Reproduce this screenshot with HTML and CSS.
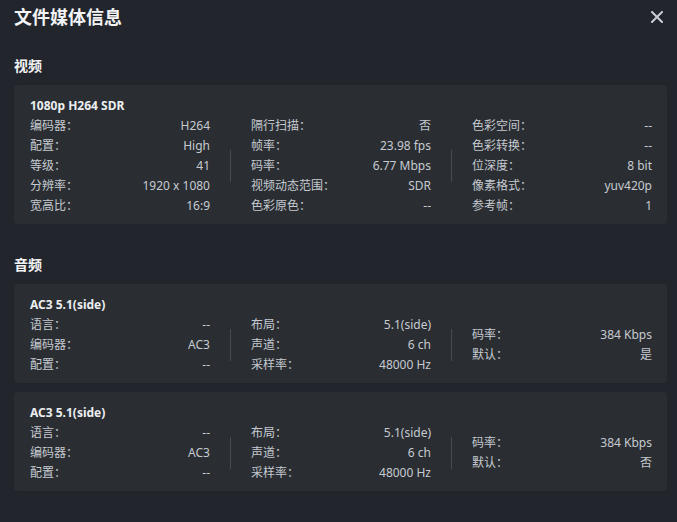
FILE: index.html
```html
<!DOCTYPE html>
<html lang="zh-CN">
<head>
<meta charset="UTF-8">
<meta name="viewport" content="width=device-width, initial-scale=1.0">
<title>文件媒体信息</title>
<link rel="stylesheet" href="styles.css">
</head>
<body>

<div class="dialog-head">
    <h1>文件媒体信息</h1>
    <button class="close-btn" title="关闭">
        <svg width="12" height="12" viewBox="0 0 12 12"><path d="M1 1 L11 11 M11 1 L1 11" stroke="#c9cdd3" stroke-width="2" stroke-linecap="square"/></svg>
    </button>
</div>

<section class="group">
    <h2>视频</h2>
    <div class="stream-card">
        <div class="stream-name">1080p H264 SDR</div>
        <div class="stream-cols">
            <div class="col">
                <div class="row"><span>编码器：</span><span>H264</span></div>
                <div class="row"><span>配置：</span><span>High</span></div>
                <div class="row"><span>等级：</span><span>41</span></div>
                <div class="row"><span>分辨率：</span><span>1920 x 1080</span></div>
                <div class="row"><span>宽高比：</span><span>16:9</span></div>
            </div>
            <span class="divider"></span>
            <div class="col">
                <div class="row"><span>隔行扫描：</span><span>否</span></div>
                <div class="row"><span>帧率：</span><span>23.98 fps</span></div>
                <div class="row"><span>码率：</span><span>6.77 Mbps</span></div>
                <div class="row"><span>视频动态范围：</span><span>SDR</span></div>
                <div class="row"><span>色彩原色：</span><span>--</span></div>
            </div>
            <span class="divider"></span>
            <div class="col">
                <div class="row"><span>色彩空间：</span><span>--</span></div>
                <div class="row"><span>色彩转换：</span><span>--</span></div>
                <div class="row"><span>位深度：</span><span>8 bit</span></div>
                <div class="row"><span>像素格式：</span><span>yuv420p</span></div>
                <div class="row"><span>参考帧：</span><span>1</span></div>
            </div>
        </div>
    </div>
</section>

<section class="group">
    <h2>音频</h2>
    <div class="stream-card">
        <div class="stream-name">AC3 5.1(side)</div>
        <div class="stream-cols">
            <div class="col">
                <div class="row"><span>语言：</span><span>--</span></div>
                <div class="row"><span>编码器：</span><span>AC3</span></div>
                <div class="row"><span>配置：</span><span>--</span></div>
            </div>
            <span class="divider"></span>
            <div class="col">
                <div class="row"><span>布局：</span><span>5.1(side)</span></div>
                <div class="row"><span>声道：</span><span>6 ch</span></div>
                <div class="row"><span>采样率：</span><span>48000 Hz</span></div>
            </div>
            <span class="divider"></span>
            <div class="col">
                <div class="row"><span>码率：</span><span>384 Kbps</span></div>
                <div class="row"><span>默认：</span><span>是</span></div>
            </div>
        </div>
    </div>
    <div class="stream-card">
        <div class="stream-name">AC3 5.1(side)</div>
        <div class="stream-cols">
            <div class="col">
                <div class="row"><span>语言：</span><span>--</span></div>
                <div class="row"><span>编码器：</span><span>AC3</span></div>
                <div class="row"><span>配置：</span><span>--</span></div>
            </div>
            <span class="divider"></span>
            <div class="col">
                <div class="row"><span>布局：</span><span>5.1(side)</span></div>
                <div class="row"><span>声道：</span><span>6 ch</span></div>
                <div class="row"><span>采样率：</span><span>48000 Hz</span></div>
            </div>
            <span class="divider"></span>
            <div class="col">
                <div class="row"><span>码率：</span><span>384 Kbps</span></div>
                <div class="row"><span>默认：</span><span>否</span></div>
            </div>
        </div>
    </div>
</section>

</body>
</html>
```

FILE: styles.css
```css
body {
    margin: 0;
    padding: 0 10px 0 14px;
    background-color: #22252c;
    color: #c6cad0;
    font-family: "Noto Sans", "Noto Sans CJK SC", sans-serif;
    font-size: 12px;
}
.dialog-head {
    display: flex;
    align-items: center;
    justify-content: space-between;
    height: 33px;
}
.dialog-head h1 {
    margin: 0;
    font-size: 18px;
    font-weight: bold;
    color: #f2f3f5;
    line-height: 24px;
}
.close-btn {
    display: flex;
    background: none;
    border: none;
    padding: 0;
    margin-right: 4px;
    cursor: pointer;
}
.group h2 {
    margin: 0 0 9px 0;
    font-size: 14px;
    line-height: 20px;
    font-weight: bold;
    color: #f2f3f5;
}
.group:first-of-type {
    margin-top: 23px;
}
.group + .group {
    margin-top: 31px;
}
.stream-card {
    background-color: #2a2e33;
    border-radius: 4px;
    padding: 11px 15px 8px 16px;
    margin-bottom: 9px;
}
.stream-name {
    font-weight: bold;
    color: #eceef0;
    line-height: 20px;
}
.stream-cols {
    display: grid;
    grid-template-columns: 1fr 41px 1fr 41px 1fr;
    align-items: center;
}
.row {
    display: flex;
    justify-content: space-between;
    line-height: 20px;
    white-space: nowrap;
}
.divider {
    justify-self: center;
    width: 1px;
    height: 32px;
    background-color: #464a51;
}
```
